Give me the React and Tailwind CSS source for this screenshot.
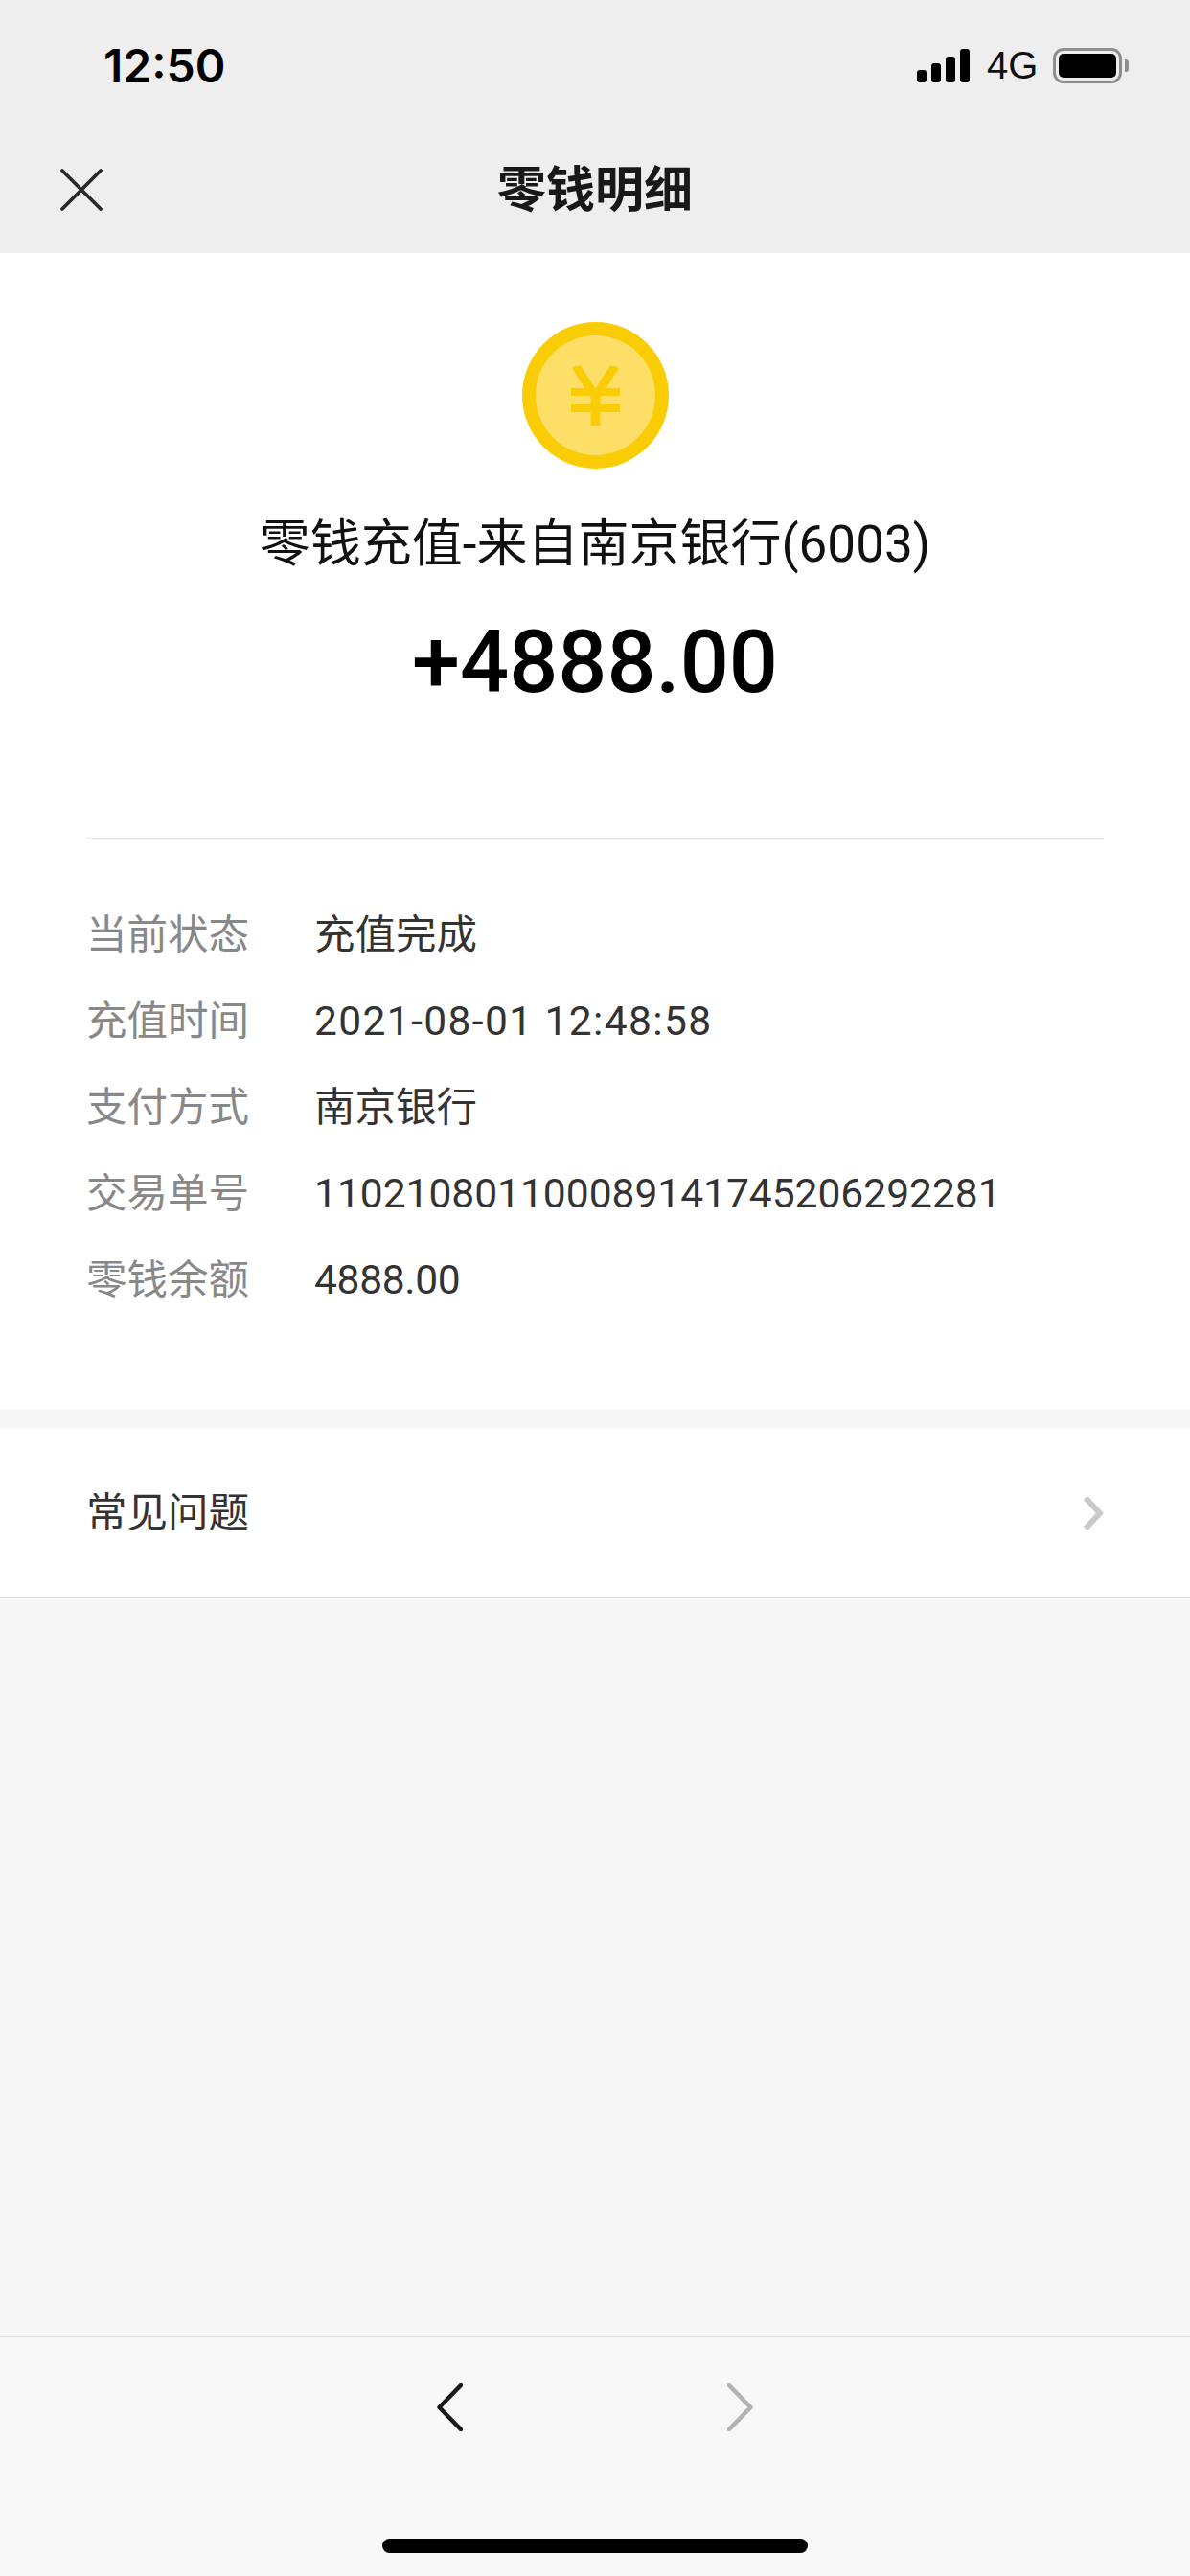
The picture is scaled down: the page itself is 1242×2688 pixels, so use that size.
const cjk = "font-['Roboto','Noto_Sans_CJK_SC',sans-serif]"

const rows = [
  { label: '当前状态', value: '充值完成', track: 'tracking-normal' },
  { label: '充值时间', value: '2021-08-01 12:48:58', track: 'tracking-[1.4px]' },
  { label: '支付方式', value: '南京银行', track: 'tracking-normal' },
  { label: '交易单号', value: '110210801100089141745206292281', track: 'tracking-normal' },
  { label: '零钱余额', value: '4888.00', track: 'tracking-[-0.3px]' },
]

function NavChevron({ left, className }) {
  return (
    <svg viewBox="0 0 27 50" className={className} fill="none" stroke="currentColor" strokeWidth="4.5" strokeLinecap="round" strokeLinejoin="round">
      <path d={left ? 'M25 2 L2.5 25 L25 48' : 'M2 2 L24.5 25 L2 48'} />
    </svg>
  )
}

function StatusBar() {
  return (
    <div className="h-[132px] pl-[108px] pr-[64px] pt-[45px] flex justify-between items-start">
      <span className="font-['Inter',sans-serif] text-[48px] leading-[48px] font-semibold text-black">12:50</span>
      <div className="flex items-center h-[40px] mt-[3px]">
        {/* señal */}
        <div className="flex items-end gap-[5px] h-[35px]">
          <div className="w-[10px] h-[13px] bg-black rounded-[3px]" />
          <div className="w-[10px] h-[20px] bg-black rounded-[3px]" />
          <div className="w-[10px] h-[27px] bg-black rounded-[3px]" />
          <div className="w-[10px] h-[35px] bg-black rounded-[3px]" />
        </div>
        <span className="ml-[18px] w-[51px] font-['Liberation_Sans',sans-serif] text-[40px] leading-[40px] text-[#111]">4G</span>
        <div className="ml-[18px] w-[72px] h-[37px] p-[3px] border-[3px] border-[#8e8e8e] rounded-[11px]">
          <div className="w-full h-full bg-black rounded-[5px]" />
        </div>
        <div className="ml-[3px] w-[4px] h-[13px] bg-[#8e8e8e] rounded-r-[3px]" />
      </div>
    </div>
  )
}

function Coin() {
  return (
    <div className="w-[153px] h-[153px] rounded-full bg-[#f9cc06] p-[14px]">
      <div className="w-full h-full rounded-full bg-[#fddf67] flex items-center justify-center">
        <svg viewBox="0 0 51 62" className="w-[51px] h-[62px]" fill="none" stroke="#f9cc06">
          <path d="M5 0 L25.5 32 L46 0" strokeWidth="9" />
          <path d="M0 27 H51 M0 44 H51" strokeWidth="8" />
          <path d="M25.5 30 V62" strokeWidth="10" />
        </svg>
      </div>
    </div>
  )
}

export default function App() {
  return (
    <div className={`w-[1242px] h-[2688px] flex flex-col bg-[#f7f7f7] overflow-hidden ${cjk}`}>
      <header className="h-[264px] shrink-0 bg-[#eeeeee]">
        <StatusBar />
        <div className="relative h-[132px] flex items-center justify-center">
          <svg viewBox="0 0 44 44" className="absolute left-[63px] top-[44px] w-[44px] h-[44px]" stroke="#2a2a2a" strokeWidth="3.8" strokeLinecap="round">
            <path d="M2 2 L42 42 M42 2 L2 42" />
          </svg>
          <h1 className="text-[51px] leading-[60px] font-bold text-[#191919] mt-[1px]">零钱明细</h1>
        </div>
      </header>

      <section className="h-[1206px] shrink-0 bg-white px-[90px] pt-[72px] flex flex-col items-center">
        <Coin />
        <p className="mt-[43px] text-[53px] leading-[72px] text-[#111] font-normal whitespace-nowrap">零钱充值-来自南京银行(6003)</p>
        <p className="mt-[38px] text-[90px] leading-[100px] font-medium text-black">+4888.00</p>
        <div className="mt-[132px] w-[1062px] h-[1px] bg-[#e9e9e9]" />
        <dl className="mt-[56px] w-full flex flex-col">
          {rows.map((row) => (
            <div key={row.label} className="h-[90px] flex items-center">
              <dt className="w-[238px] shrink-0 text-[42.5px] text-[#888888]">{row.label}</dt>
              <dd className={`text-[42.5px] text-[#333333] whitespace-nowrap ${row.track}`}>{row.value}</dd>
            </div>
          ))}
        </dl>
      </section>

      <div className="mt-[21px] h-[176px] shrink-0 bg-white border-b border-[#dddddd] px-[90px] flex items-center justify-between">
        <span className="text-[42.5px] text-[#333333]">常见问题</span>
        <svg viewBox="0 0 22 34" className="w-[22px] h-[34px]" fill="none" stroke="#c8c8cd" strokeWidth="6">
          <path d="M3 1 L18 17 L3 33" />
        </svg>
      </div>

      <div className="flex-1" />

      <footer className="h-[250px] shrink-0 bg-[#f8f8f8] border-t border-[#e0e0e0] flex flex-col items-center">
        <div className="mt-[48px] w-[330px] flex justify-between">
          <NavChevron left className="w-[27px] h-[50px] text-[#1a1a1a]" />
          <NavChevron className="w-[27px] h-[50px] text-[#b2b2b2]" />
        </div>
        <div className="mt-[112px] w-[444px] h-[15px] bg-black rounded-full" />
      </footer>
    </div>
  )
}
